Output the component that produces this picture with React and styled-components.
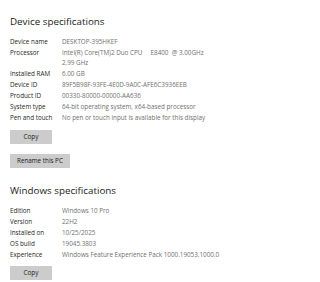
import React from 'react';
import styled, { createGlobalStyle } from 'styled-components';

const Global = createGlobalStyle`
  html, body {
    margin: 0;
    padding: 0;
    background: #ffffff;
  }
  body {
    font-family: "Open Sans", "Noto Sans", sans-serif;
    -webkit-font-smoothing: antialiased;
  }
`;

const Page = styled.div`
  width: 320px;
  height: 282px;
  overflow: hidden;
  padding: 15px 0 0 10px;
  box-sizing: border-box;
  display: flex;
  flex-direction: column;
`;

const Section = styled.section`
  display: flex;
  flex-direction: column;
  margin-top: ${(p) => p.$top || 0}px;
`;

const Heading = styled.h2`
  margin: 0 0 8px 0;
  font-size: 9.8px;
  line-height: 14px;
  font-weight: 400;
  color: #1b1b1b;
`;

const Specs = styled.dl`
  margin: 0;
  display: grid;
  grid-template-columns: 52px 180px;
  row-gap: 1.6px;
`;

const Label = styled.dt`
  margin: 0;
  font-size: 6.3px;
  line-height: 9.5px;
  color: #262626;
`;

const Value = styled.dd`
  margin: 0;
  font-size: 6.3px;
  line-height: 9.5px;
  color: #707070;
  white-space: pre-wrap;
`;

const Button = styled.button`
  align-self: flex-start;
  margin-top: ${(p) => p.$top || 0}px;
  min-width: 42px;
  height: 14px;
  padding: 0 7px;
  border: none;
  background: #cccccc;
  color: #1b1b1b;
  font-family: inherit;
  font-size: 6.3px;
  line-height: 14px;
`;

const device = [
  ['Device name', 'DESKTOP-395HKEF'],
  ['Processor', 'Intel(R) Core(TM)2 Duo CPU     E8400  @ 3.00GHz\n2.99 GHz'],
  ['Installed RAM', '6.00 GB'],
  ['Device ID', '89F5B98F-93FE-4E0D-9A0C-AFE6C3936EEB'],
  ['Product ID', '00330-80000-00000-AA636'],
  ['System type', '64-bit operating system, x64-based processor'],
  ['Pen and touch', 'No pen or touch input is available for this display'],
];

const windows = [
  ['Edition', 'Windows 10 Pro'],
  ['Version', '22H2'],
  ['Installed on', '10/25/2025'],
  ['OS build', '19045.3803'],
  ['Experience', 'Windows Feature Experience Pack 1000.19053.1000.0'],
];

function SpecList({ rows }) {
  return (
    <Specs>
      {rows.map(([k, v]) => (
        <React.Fragment key={k}>
          <Label>{k}</Label>
          <Value>{v}</Value>
        </React.Fragment>
      ))}
    </Specs>
  );
}

export default function App() {
  return (
    <>
      <Global />
      <Page>
        <Section>
          <Heading>Device specifications</Heading>
          <SpecList rows={device} />
          <Button $top={7}>Copy</Button>
          <Button $top={10}>Rename this PC</Button>
        </Section>
        <Section $top={16}>
          <Heading>Windows specifications</Heading>
          <SpecList rows={windows} />
          <Button $top={7}>Copy</Button>
        </Section>
      </Page>
    </>
  );
}
